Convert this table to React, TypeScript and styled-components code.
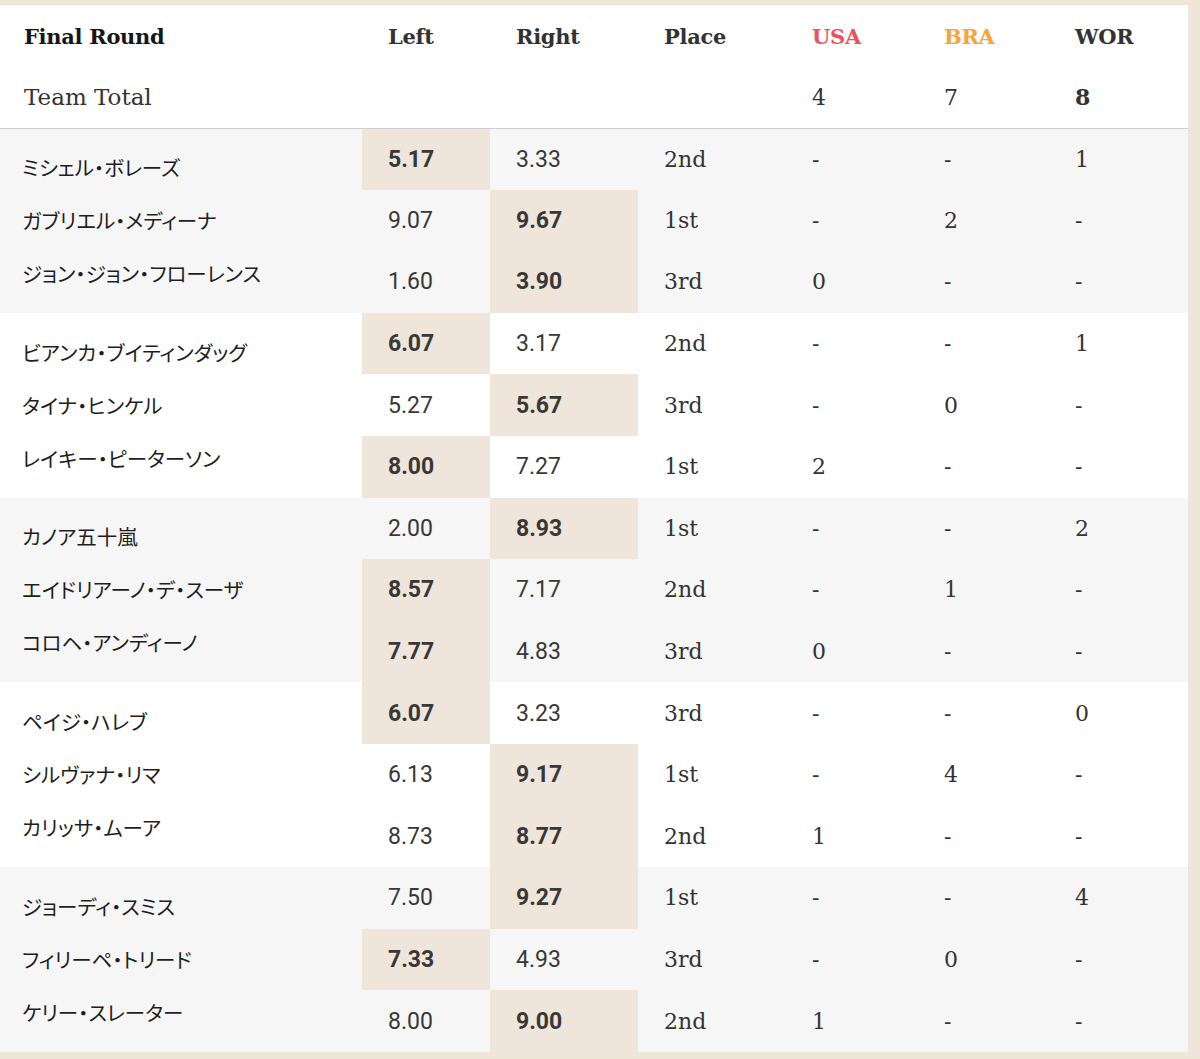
import styled, { createGlobalStyle } from "styled-components";

type TRow = {
  name: string;
  left: string;
  right: string;
  place: string;
  usa: string;
  bra: string;
  wor: string;
};

const GROUPS: TRow[][] = [
  [
    { name: "ミシェル・ボレーズ", left: "5.17", right: "3.33", place: "2nd", usa: "-", bra: "-", wor: "1" },
    { name: "ガブリエル・メディーナ", left: "9.07", right: "9.67", place: "1st", usa: "-", bra: "2", wor: "-" },
    { name: "ジョン・ジョン・フローレンス", left: "1.60", right: "3.90", place: "3rd", usa: "0", bra: "-", wor: "-" },
  ],
  [
    { name: "ビアンカ・ブイティンダッグ", left: "6.07", right: "3.17", place: "2nd", usa: "-", bra: "-", wor: "1" },
    { name: "タイナ・ヒンケル", left: "5.27", right: "5.67", place: "3rd", usa: "-", bra: "0", wor: "-" },
    { name: "レイキー・ピーターソン", left: "8.00", right: "7.27", place: "1st", usa: "2", bra: "-", wor: "-" },
  ],
  [
    { name: "カノア五十嵐", left: "2.00", right: "8.93", place: "1st", usa: "-", bra: "-", wor: "2" },
    { name: "エイドリアーノ・デ・スーザ", left: "8.57", right: "7.17", place: "2nd", usa: "-", bra: "1", wor: "-" },
    { name: "コロヘ・アンディーノ", left: "7.77", right: "4.83", place: "3rd", usa: "0", bra: "-", wor: "-" },
  ],
  [
    { name: "ペイジ・ハレブ", left: "6.07", right: "3.23", place: "3rd", usa: "-", bra: "-", wor: "0" },
    { name: "シルヴァナ・リマ", left: "6.13", right: "9.17", place: "1st", usa: "-", bra: "4", wor: "-" },
    { name: "カリッサ・ムーア", left: "8.73", right: "8.77", place: "2nd", usa: "1", bra: "-", wor: "-" },
  ],
  [
    { name: "ジョーディ・スミス", left: "7.50", right: "9.27", place: "1st", usa: "-", bra: "-", wor: "4" },
    { name: "フィリーペ・トリード", left: "7.33", right: "4.93", place: "3rd", usa: "-", bra: "0", wor: "-" },
    { name: "ケリー・スレーター", left: "8.00", right: "9.00", place: "2nd", usa: "1", bra: "-", wor: "-" },
  ],
];

const SLAB = `"Roboto Slab", "DejaVu Serif", serif`;
const SANS = `Roboto, "Liberation Sans", sans-serif`;
const JP = `"Noto Sans CJK JP", sans-serif`;

const GlobalStyle = createGlobalStyle`
  body {
    margin: 0;
    background: #efe6da;
  }
`;

const App: React.FC = () => {
  return (
    <>
      <GlobalStyle />
      <Frame>
        <Table>
          <colgroup>
            <col style={{ width: 362 }} />
            <col style={{ width: 128 }} />
            <col style={{ width: 148 }} />
            <col style={{ width: 148 }} />
            <col style={{ width: 132 }} />
            <col style={{ width: 131 }} />
            <col style={{ width: 139 }} />
          </colgroup>
          <thead>
            <HeadRow>
              <HeadCell $title>Final Round</HeadCell>
              <HeadCell>Left</HeadCell>
              <HeadCell>Right</HeadCell>
              <HeadCell>Place</HeadCell>
              <HeadCell $color="#f0505b">USA</HeadCell>
              <HeadCell $color="#f7a43c">BRA</HeadCell>
              <HeadCell>WOR</HeadCell>
            </HeadRow>
            <TotalRow>
              <TotalCell>Team Total</TotalCell>
              <TotalCell />
              <TotalCell />
              <TotalCell />
              <TotalCell>4</TotalCell>
              <TotalCell>7</TotalCell>
              <TotalCell $bold>8</TotalCell>
            </TotalRow>
          </thead>
          {GROUPS.map((group, gi) => (
            <Group key={gi} $shaded={gi % 2 === 0}>
              {group.map((row, ri) => {
                const leftWins = parseFloat(row.left) > parseFloat(row.right);
                return (
                  <BodyRow key={ri}>
                    {ri === 0 && (
                      <NameCell rowSpan={3}>
                        {group.map((r) => (
                          <Name key={r.name}>{r.name}</Name>
                        ))}
                      </NameCell>
                    )}
                    <ScoreCell $best={leftWins}>{row.left}</ScoreCell>
                    <ScoreCell $best={!leftWins}>{row.right}</ScoreCell>
                    <SlabCell>{row.place}</SlabCell>
                    <SlabCell>{row.usa}</SlabCell>
                    <SlabCell>{row.bra}</SlabCell>
                    <SlabCell>{row.wor}</SlabCell>
                  </BodyRow>
                );
              })}
            </Group>
          ))}
        </Table>
      </Frame>
    </>
  );
};

export default App;

const Frame = styled.div`
  padding: 5px 12px 7px 0;
`;

const Table = styled.table`
  width: 1188px;
  table-layout: fixed;
  border-collapse: collapse;
  border-spacing: 0;
  background: #fff;
  color: #333;
`;

const HeadRow = styled.tr`
  height: 62px;
`;

const HeadCell = styled.th<{ $title?: boolean; $color?: string }>`
  padding: 0 0 0 ${({ $title }) => ($title ? 24 : 26)}px;
  text-align: left;
  font-family: ${SLAB};
  font-weight: 700;
  font-size: 21px;
  letter-spacing: -0.3px;
  color: ${({ $color, $title }) => $color ?? ($title ? "#161616" : "#333")};
`;

const TotalRow = styled.tr`
  height: 61px;
  border-bottom: 1px solid #cfcfcf;
`;

const TotalCell = styled.td<{ $bold?: boolean }>`
  padding: 0 0 0 26px;
  font-family: ${SLAB};
  font-size: 22px;
  font-weight: ${({ $bold }) => ($bold ? 700 : 400)};
  color: #333;

  &:first-child {
    padding-left: 24px;
    font-size: 23px;
  }
`;

const Group = styled.tbody<{ $shaded: boolean }>`
  background: ${({ $shaded }) => ($shaded ? "#f6f6f6" : "#fff")};
`;

const BodyRow = styled.tr`
  height: 61.6px;
`;

const NameCell = styled.td`
  padding: 0 0 0 22px;
  vertical-align: middle;
`;

const Name = styled.div`
  font-family: ${JP};
  font-size: 20.5px;
  line-height: 53px;
  color: #1e1e1e;
  font-feature-settings: "palt";
  white-space: nowrap;
`;

const ScoreCell = styled.td<{ $best: boolean }>`
  padding: 0 0 0 26px;
  font-family: ${SANS};
  font-size: 23px;
  font-weight: ${({ $best }) => ($best ? 700 : 400)};
  background: ${({ $best }) => ($best ? "#efe5da" : "transparent")};
  color: #383838;
`;

const SlabCell = styled.td`
  padding: 0 0 0 26px;
  font-family: ${SLAB};
  font-size: 22px;
  color: #333;
`;
